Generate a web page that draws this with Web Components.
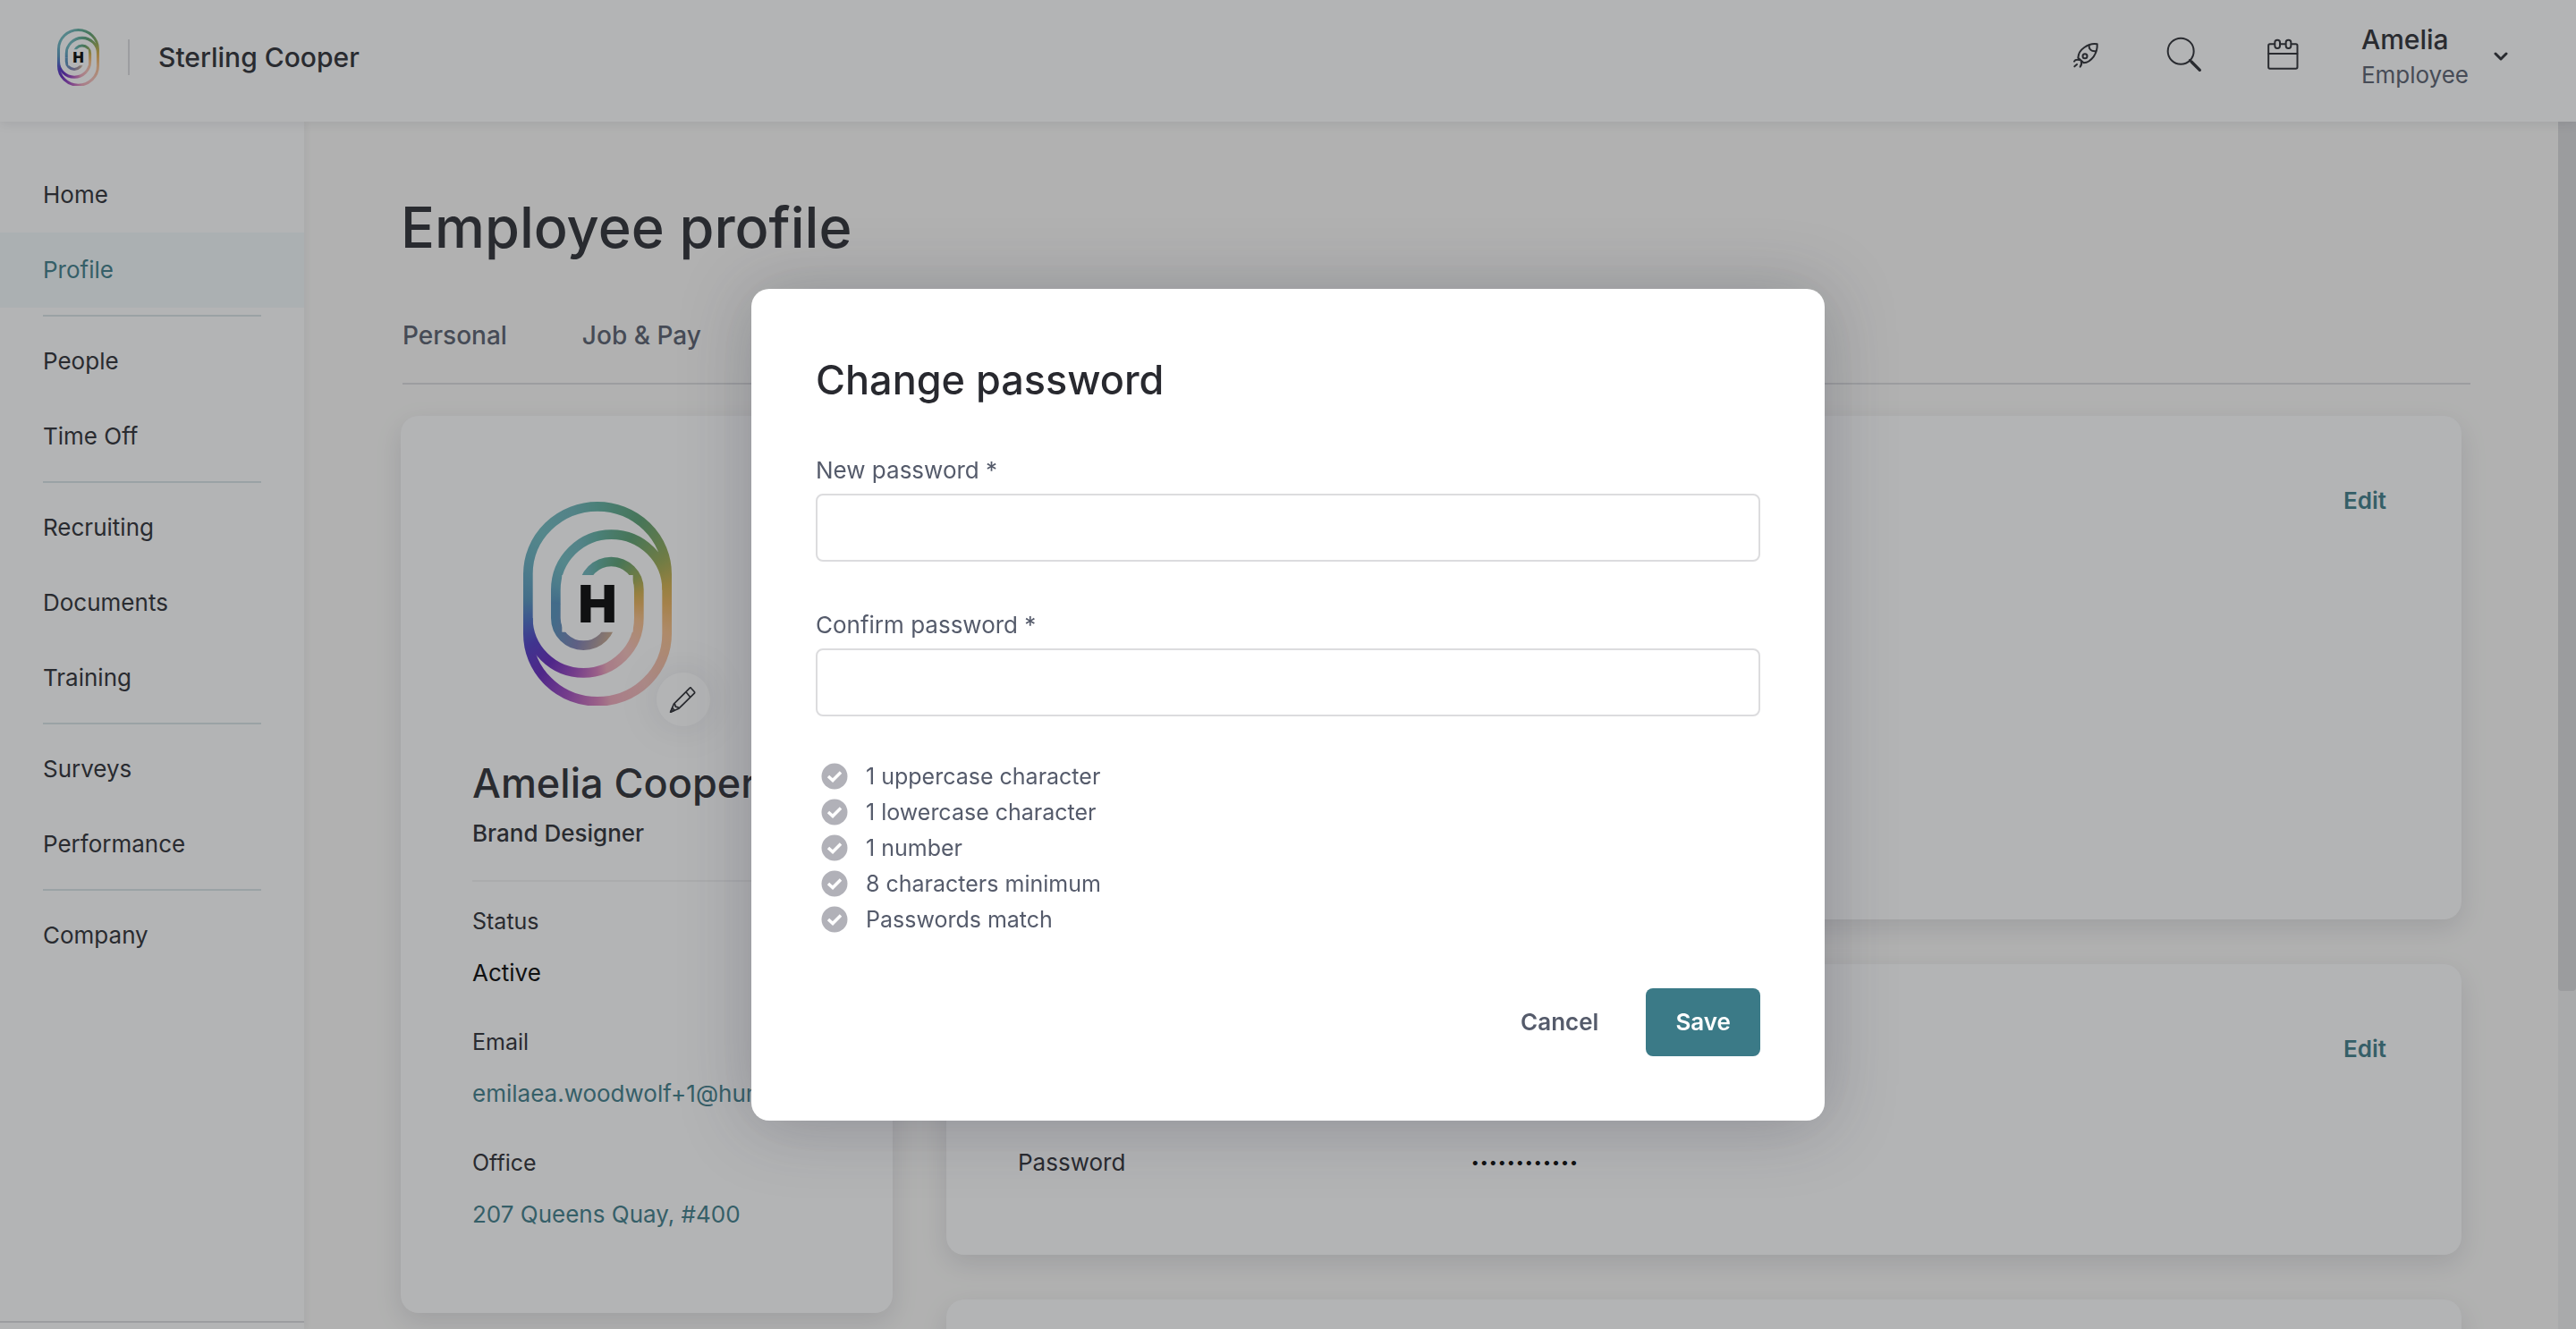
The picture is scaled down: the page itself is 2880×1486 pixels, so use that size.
<!DOCTYPE html>
<html lang="en">
<head>
<meta charset="utf-8">
<title>Employee profile</title>
<style>
  :root {
    --ink: #28292f;
    --muted: #555b6b;
    --teal: #3b7a87;
    --line: #dcdcde;
    --page: #fcfbf9;
    --card-shadow: 0 10px 30px rgba(20, 20, 40, 0.12);
  }
  body {
    margin: 0;
    height: 100vh;
    overflow: hidden;
    font-family: Inter, "Liberation Sans", sans-serif;
    font-size: 26px;
    line-height: 40px;
    color: var(--ink);
    background: var(--page);
  }
</style>
</head>
<body>
<hr-app></hr-app>

<script>
class BrandMark extends HTMLElement {
    constructor() {
        super();
        this.attachShadow({ mode: 'open' });
        this.shadowRoot.innerHTML = `
      <style>
        :host { display: block; width: 47px; }
        svg { display: block; width: 100%; height: auto; }
        .sweep {
          width: 498px;
          height: 685px;
          background: conic-gradient(from 0deg at 50% 50%,
            rgb(92,174,160) 0deg, rgb(86,157,110) 27deg, rgb(150,168,80) 56deg,
            rgb(209,174,72) 75deg, rgb(233,176,90) 90deg, rgb(247,190,136) 112deg,
            rgb(245,190,185) 149deg, rgb(238,167,185) 172deg, rgb(216,124,185) 180deg,
            rgb(156,68,190) 199deg, rgb(98,35,187) 219deg, rgb(75,56,196) 239deg,
            rgb(70,105,196) 256deg, rgb(81,145,187) 273deg, rgb(95,168,190) 296deg,
            rgb(108,185,190) 322deg, rgb(106,178,184) 345deg, rgb(92,174,160) 360deg);
        }
      </style>
      <svg viewBox="134 122 498 685" role="img" aria-label="Company logo">
        <linearGradient id="inner" gradientUnits="userSpaceOnUse" x1="243" y1="500" x2="430" y2="560">
          <stop offset="0" stop-color="#518fbb"/>
          <stop offset="0.500" stop-color="#7b7bb2"/>
          <stop offset="1" stop-color="#c6a68b"/>
        </linearGradient>
        <mask id="rings" maskUnits="userSpaceOnUse" x="134" y="122" width="498" height="685">
          <g fill="none" stroke="#fff" stroke-width="32">
            <path d="M150 365A233 227 0 0 1 616 365V565A233 227 0 0 1 150 565Z"/>
            <path d="M616 418A186.500 186 0 0 0 243 418V465"/>
            <path d="M336 416A93 93 0 0 1 522 416V512A186 184 0 0 1 150 512"/>
          </g>
          <rect x="264" y="368" width="238" height="191" fill="#000"/>
        </mask>
        <clipPath id="tail"><path d="M134 460H264V559H640V807H134Z"/></clipPath>
        <foreignObject x="134" y="122" width="498" height="685" mask="url(#rings)">
          <div class="sweep"></div>
        </foreignObject>
        <path d="M243 464V512A93 92 0 0 0 429 512" fill="none" stroke="url(#inner)" stroke-width="32" clip-path="url(#tail)"/>
        <text x="383" y="527" text-anchor="middle" font-size="172" font-weight="900" fill="#000">H</text>
      </svg>
    `;
    }
}

class AppHeader extends HTMLElement {
    constructor() {
        super();
        this.attachShadow({ mode: 'open' });
        this.shadowRoot.innerHTML = `
      <style>
        :host {
          display: flex;
          align-items: center;
          box-sizing: border-box;
          height: 136px;
          padding: 0 72px 8px 64px;
          background: #fff;
          box-shadow: 0 2px 12px rgba(20, 20, 40, 0.1);
          position: relative;
          z-index: 1;
        }
        .company {
          margin-left: 32px;
          padding-left: 32px;
          border-left: 2px solid var(--line);
          font-size: 30px;
          font-weight: 500;
        }
        .tools { display: flex; gap: 70px; margin-left: auto; margin-right: 68px; }
        button {
          display: flex;
          align-items: center;
          padding: 0;
          border: 0;
          background: none;
          font: inherit;
          color: inherit;
          text-align: left;
        }
        .tools svg { width: 40px; height: 48px; }
        svg { fill: none; stroke: var(--ink); stroke-width: 6; stroke-linecap: round; stroke-linejoin: round; }
        .user { gap: 24px; }
        .name { display: block; font-size: 30px; font-weight: 500; }
        .role { display: block; color: var(--muted); }
      </style>
      <brand-mark></brand-mark>
      <span class="company">Sterling Cooper</span>
      <div class="tools">
        <button aria-label="What's new">
          <svg viewBox="39 60 120 144">
            <path d="M137 88C138 103 133 118 125 130C116 142 106 150 92 151L73 134C74 118 82 107 94 99C107 90 122 85 137 88Z"/>
            <path d="M110 92C108 104 117 113 131 112"/>
            <circle cx="96" cy="128" r="7.500"/>
            <path d="M60 146C63 140 70 140 77 141M83 146C86 152 84 159 80 164M61 163L69 156"/>
          </svg>
        </button>
        <button aria-label="Search">
          <svg viewBox="369 60 120 144">
            <circle cx="417.500" cy="111.500" r="43.500"/>
            <path d="M447 141L453 147"/>
            <path d="M453 147L481 175" stroke-width="10"/>
          </svg>
        </button>
        <button aria-label="Calendar">
          <svg viewBox="696 60 120 144">
            <rect x="708.500" y="88" width="97" height="82" rx="5"/>
            <path d="M709 120H805"/>
            <rect x="730" y="74" width="17" height="28" rx="8" fill="#fff"/>
            <rect x="767" y="74" width="17" height="28" rx="8" fill="#fff"/>
          </svg>
        </button>
      </div>
      <button class="user">
        <span>
          <span class="name">Amelia</span>
          <span class="role">Employee</span>
        </span>
        <svg width="24" height="24" viewBox="0 0 24 24"><path d="M6 8L12 14L18 8" stroke-width="3"/></svg>
      </button>
    `;
    }
}

class SideNav extends HTMLElement {
    constructor() {
        super();
        this.attachShadow({ mode: 'open' });
        const groups = [
            ['Home', 'Profile'],
            ['People', 'Time Off'],
            ['Recruiting', 'Documents', 'Training'],
            ['Surveys', 'Performance'],
            ['Company']
        ];
        const link = name => `<a href="#"${name === 'Profile' ? ' aria-current="page"' : ''}>${name}</a>`;

        this.shadowRoot.innerHTML = `
      <style>
        :host {
          display: flex;
          flex-direction: column;
          flex: none;
          width: 340px;
          background: #fff;
          box-shadow: 2px 0 8px rgba(20, 20, 40, 0.06);
        }
        nav { padding-top: 40px; }
        a {
          display: block;
          padding: 22px 48px;
          color: inherit;
          text-decoration: none;
        }
        a[aria-current] { color: var(--teal); background: #f3f9fa; }
        hr { margin: 8px 48px; border: 0; border-top: 2px solid #d8e3e7; }
        footer { margin-top: auto; height: 7px; border-top: 2px solid var(--line); }
      </style>
      <nav>${groups.map(group => group.map(link).join('')).join('<hr>')}</nav>
      <footer></footer>
    `;
    }
}

class PanelCard extends HTMLElement {
    constructor() {
        super();
        this.attachShadow({ mode: 'open' });
        this.shadowRoot.innerHTML = `
      <style>
        :host {
          display: block;
          box-sizing: border-box;
          padding: 80px;
          border-radius: 20px;
          background: #fff;
          box-shadow: var(--card-shadow);
        }
      </style>
      <slot></slot>
    `;
    }
}

class ProfileSummary extends HTMLElement {
    constructor() {
        super();
        this.attachShadow({ mode: 'open' });
        this.shadowRoot.innerHTML = `
      <style>
        :host { display: block; padding: 16px 0 10px; white-space: nowrap; }
        .avatar { display: flex; justify-content: center; width: 280px; }
        .frame { position: relative; }
        .frame brand-mark { width: 166px; }
        .frame button {
          position: absolute;
          right: -43px;
          bottom: -23px;
          display: grid;
          place-items: center;
          width: 60px;
          height: 60px;
          padding: 0 2px 0 0;
          border: 0;
          border-radius: 50%;
          background: #fff;
          box-shadow: 0 0 48px rgba(20, 20, 40, 0.12);
        }
        .frame svg { fill: none; stroke: var(--ink); stroke-width: 5; stroke-linejoin: round; }
        h2 { margin: 59px 0 8px; font-size: 45px; line-height: 56px; font-weight: 500; }
        .job { margin: 0; font-weight: 500; }
        dl { margin: 32px 0 0; padding-top: 24px; border-top: 2px solid #f2f2f3; }
        dt { font-size: 25px; }
        dd { margin: 18px 0 37px; }
        dd:last-child { margin-bottom: 0; }
        .status { color: #000; }
        a { color: var(--teal); text-decoration: none; }
      </style>
      <div class="avatar">
        <div class="frame">
          <brand-mark></brand-mark>
          <button aria-label="Edit photo">
            <svg width="30" height="31" viewBox="626 740 90 92">
              <path d="M631 827L642 800L696 746Q698 744 700 747L711 759Q713 762 711 764L659 815Z"/>
              <path d="M642 800L646 802L648 809L656 811L659 815M683 760L697 777M631 827L637 813L644 821Z"/>
            </svg>
          </button>
        </div>
      </div>
      <h2>Amelia Cooper</h2>
      <p class="job">Brand Designer</p>
      <dl>
        <dt>Status</dt><dd class="status">Active</dd>
        <dt>Email</dt><dd><a href="#">emilaea.woodwolf+1@humi.ca</a></dd>
        <dt>Office</dt><dd><a href="#">207 Queens Quay, #400</a></dd>
      </dl>
    `;
    }
}

class ProfilePage extends HTMLElement {
    constructor() {
        super();
        this.attachShadow({ mode: 'open' });
        this.shadowRoot.innerHTML = `
      <style>
        :host {
          display: block;
          flex: 1;
          min-width: 0;
          box-sizing: border-box;
          padding: 80px 98px 0 108px;
          overflow: hidden;
        }
        h1 { margin: 0 0 63px; font-size: 63px; line-height: 76px; font-weight: 500; }
        .tabs {
          display: flex;
          gap: 84px;
          margin: 0 0 35px 2px;
          padding-bottom: 33px;
          border-bottom: 2px solid var(--line);
          font-size: 28px;
          font-weight: 500;
        }
        .tabs a { color: var(--muted); text-decoration: none; }
        .columns { display: flex; align-items: flex-start; gap: 60px; margin-right: 10px; }
        .summary { flex: none; width: 550px; }
        .sections { flex: 1; display: grid; gap: 50px; }
        .edit {
          display: block;
          margin-left: auto;
          padding: 0 4px;
          border: 0;
          background: none;
          font: inherit;
          font-weight: 600;
          line-height: 30px;
          color: var(--teal);
        }
        .details { min-height: 563px; }
        .row { display: grid; grid-template-columns: 33% 1fr; margin: 89px 0 0; line-height: 46px; }
        .row dd { margin: 0; color: #000; font-size: 30px; font-weight: 700; }
      </style>
      <h1>Employee profile</h1>
      <nav class="tabs"><a href="#">Personal</a><a href="#">Job &amp; Pay</a></nav>
      <div class="columns">
        <panel-card class="summary"><profile-summary></profile-summary></panel-card>
        <div class="sections">
          <panel-card class="details"><button class="edit">Edit</button></panel-card>
          <panel-card>
            <button class="edit">Edit</button>
            <dl class="row"><dt>Password</dt><dd>············</dd></dl>
          </panel-card>
          <panel-card></panel-card>
        </div>
      </div>
    `;
    }
}

class PasswordField extends HTMLElement {
    constructor() {
        super();
        this.attachShadow({ mode: 'open' });
        this.shadowRoot.innerHTML = `
      <style>
        :host { display: block; }
        label { display: block; margin-bottom: 10px; line-height: 32px; color: var(--muted); }
        input {
          display: block;
          box-sizing: border-box;
          width: 100%;
          height: 76px;
          padding: 0 24px;
          border: 2px solid var(--line);
          border-radius: 8px;
          background: #fff;
          font: inherit;
        }
      </style>
      <label for="field"></label>
      <input id="field" type="password" required>
    `;
    }

    connectedCallback() {
        this.shadowRoot.querySelector('label').textContent = this.getAttribute('label') + ' *';
    }
}

class PasswordDialog extends HTMLElement {
    constructor() {
        super();
        this.attachShadow({ mode: 'open' });
        const rules = [
            '1 uppercase character',
            '1 lowercase character',
            '1 number',
            '8 characters minimum',
            'Passwords match'
        ];

        this.shadowRoot.innerHTML = `
      <style>
        /* covers the whole window, the dialog sits a bit below its middle */
        :host {
          display: flex;
          align-items: center;
          justify-content: center;
          box-sizing: border-box;
          position: fixed;
          inset: 0;
          z-index: 10;
          padding-top: 90px;
          background: rgba(44, 47, 50, 0.36);
        }
        form {
          display: grid;
          gap: 55px;
          box-sizing: border-box;
          width: 1200px;
          padding: 72px;
          border-radius: 20px;
          background: #fff;
          box-shadow: 0 4px 80px rgba(40, 40, 60, 0.28);
        }
        h2 { margin: 0; font-size: 45px; line-height: 60px; font-weight: 500; }
        ul {
          margin: -8px 0 0;
          padding: 0 0 0 6px;
          list-style: none;
          font-size: 25px;
          color: var(--muted);
        }
        li { display: flex; align-items: center; gap: 20px; }
        footer { display: flex; justify-content: flex-end; gap: 20px; margin-top: 2px; }
        button {
          height: 76px;
          padding: 0 33px;
          border: 0;
          border-radius: 8px;
          background: none;
          font: inherit;
          font-weight: 600;
          color: var(--muted);
        }
        .save { color: #fff; background: var(--teal); }
      </style>
      <form role="dialog" aria-labelledby="title">
        <h2 id="title">Change password</h2>
        <password-field label="New password"></password-field>
        <password-field label="Confirm password"></password-field>
        <ul>
          ${rules.map(rule => `<li>
            <svg width="30" height="30" viewBox="0 0 30 30" aria-hidden="true">
              <circle cx="15" cy="15" r="14.500" fill="#b1b1b8"/>
              <path d="M8 15L13 19.500L22 10.500" fill="none" stroke="#fff" stroke-width="3.500"/>
            </svg>${rule}</li>`).join('')}
        </ul>
        <footer>
          <button type="button">Cancel</button>
          <button type="button" class="save">Save</button>
        </footer>
      </form>
    `;
    }
}

class HrApp extends HTMLElement {
    constructor() {
        super();
        this.attachShadow({ mode: 'open' });
        this.shadowRoot.innerHTML = `
      <style>
        :host { display: flex; flex-direction: column; height: 100vh; }
        .body { flex: 1; display: flex; min-height: 0; }
        .track { flex: none; width: 20px; background: #f0f0ef; }
        .thumb { height: 72%; border-radius: 0 0 4px 4px; background: #d9d9db; }
      </style>
      <app-header></app-header>
      <div class="body">
        <side-nav></side-nav>
        <profile-page></profile-page>
        <div class="track"><div class="thumb"></div></div>
      </div>
      <password-dialog></password-dialog>
    `;
    }
}

customElements.define('brand-mark', BrandMark);
customElements.define('app-header', AppHeader);
customElements.define('side-nav', SideNav);
customElements.define('panel-card', PanelCard);
customElements.define('profile-summary', ProfileSummary);
customElements.define('profile-page', ProfilePage);
customElements.define('password-field', PasswordField);
customElements.define('password-dialog', PasswordDialog);
customElements.define('hr-app', HrApp);
</script>
</body>
</html>
